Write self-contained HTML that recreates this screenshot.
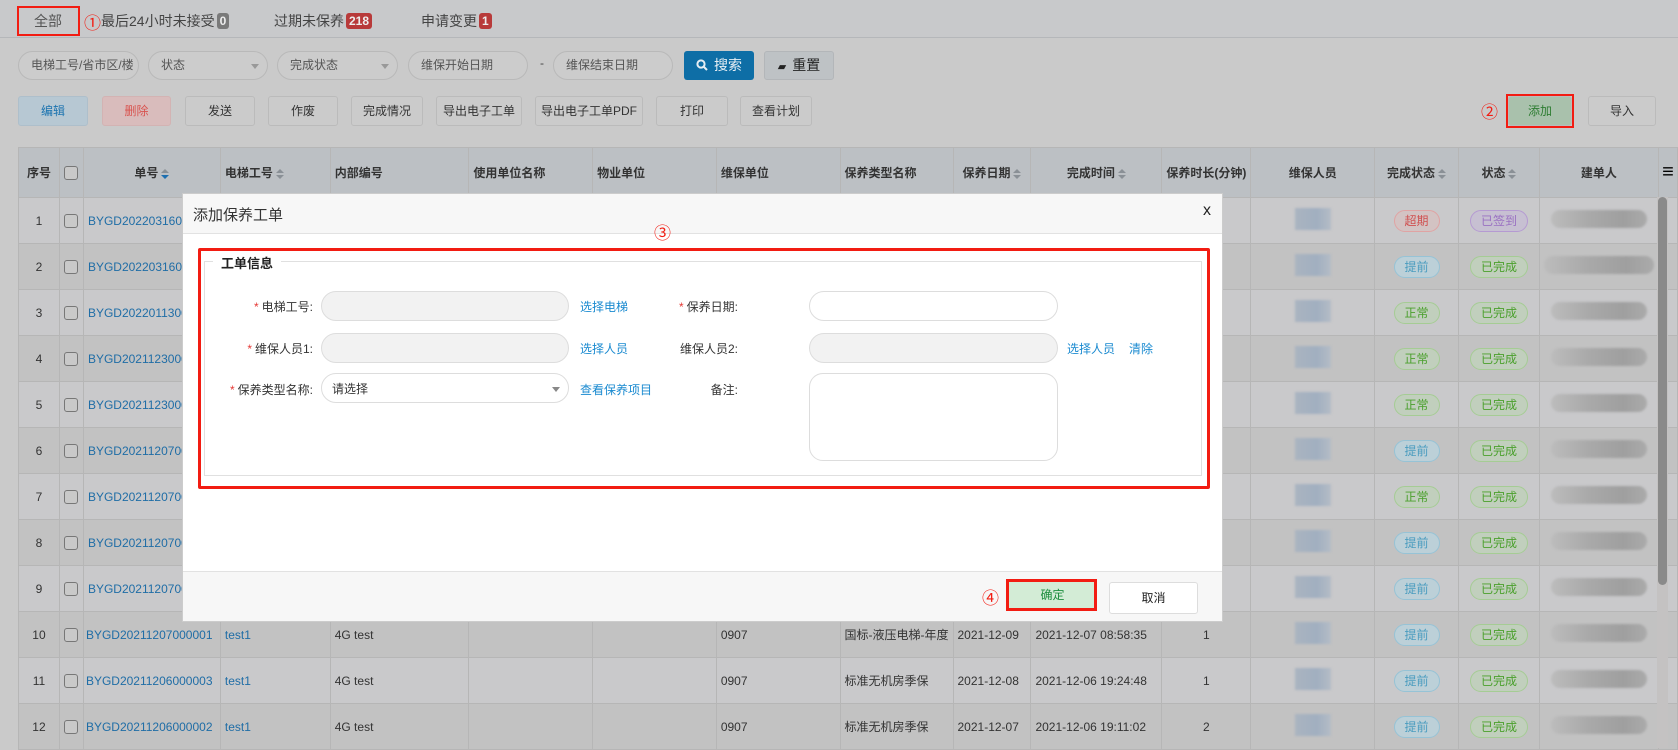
<!DOCTYPE html>
<html><head><meta charset="utf-8">
<style>
*{box-sizing:border-box;margin:0;padding:0}
body{width:1678px;height:748px;overflow:hidden;background:#cacaca;font-family:"Liberation Sans","Noto Sans CJK SC",sans-serif;font-size:12px;color:#333;position:relative}
.a{position:absolute}
.tabs{left:0;top:0;width:1678px;height:38px;background:#c8c9cb;border-bottom:1px solid #b5b7ba}
.tab{position:absolute;top:11px;font-size:14px;color:#444}
.bd{display:inline-block;color:#eee;font-size:12px;font-weight:bold;border-radius:3px;padding:0 3px;height:16px;line-height:16px;vertical-align:1px;margin-left:2px}
.inp{position:absolute;top:51px;height:29px;border:1px solid #b9b9b9;border-radius:15px;background:#cccccc;color:#555;font-size:12px;line-height:27px;padding-left:12px;white-space:nowrap;overflow:hidden}
.caret{position:absolute;right:8px;top:12px;border-left:4px solid transparent;border-right:4px solid transparent;border-top:5px solid #999}
.btn{position:absolute;top:96px;height:30px;border:1px solid #bbb;border-radius:3px;background:#cbcbcb;text-align:center;line-height:28px;font-size:12px;color:#333}
.red{position:absolute;border:2px solid #f21c12}
.circ{position:absolute;color:#f21c12;font-size:17px}
table{position:absolute;left:18px;top:147px;border-collapse:collapse;table-layout:fixed}
td,th{border:1px solid #b6b6b6;height:46px;white-space:nowrap;overflow:hidden;font-size:12px;padding:0 4px}
th{height:50px;background:#bcc0c4;color:#333;font-weight:bold;text-align:center}
tr.o td{background:#c9c9cb}tr.e td{background:#c2c2c2}
.lnk{color:#1f6da6}
.cb{display:inline-block;width:14px;height:14px;border:1px solid #777;border-radius:3px;background:#c9c9c9;vertical-align:middle}
.srt{display:inline-block;width:8px;vertical-align:middle;margin-left:3px}
.pill{display:inline-block;height:22px;line-height:20px;border-radius:11px;padding:0 10px;border:1px solid;font-size:12px}
.pb{color:#4a9cbf;border-color:#96c3d6;background:#bcd0d8}
.pg{color:#4aa02c;border-color:#a5cc94;background:#c1cfbd}
.pr{color:#d05050;border-color:#e0a3a3;background:#d3c3c3}
.pp{color:#9a70c2;border-color:#b59ad2;background:#c7c0d2}
.blu{display:inline-block;width:36px;height:22px;background:linear-gradient(90deg,#aab4c0,#a1afc0 60%,#b4bcc6);filter:blur(1px)}
.gry{display:inline-block;width:96px;height:18px;border-radius:9px;background:linear-gradient(90deg,#bcbcbc,#a9a9a9 40%,#9f9f9f 75%,#ababab);filter:blur(1px)}
.dlg{left:182px;top:193px;width:1041px;height:429px;background:#fff;border:1px solid #ccc}
.lbl{position:absolute;text-align:right;font-size:12px;color:#333;width:130px}
.lbl i{color:#e53935;font-style:normal;margin-right:3px}
.fi{position:absolute;height:30px;border:1px solid #ddd;border-radius:15px;background:#f2f2f2}
.bl{position:absolute;color:#1a8ad0;font-size:12px}
</style></head><body>

<div class="a tabs"></div>
<div class="tab" style="left:34px;color:#555">全部</div>
<div class="red" style="left:17px;top:6px;width:63px;height:30px"></div>
<div class="circ" style="left:84px;top:9px">①</div>
<div class="tab" style="left:101px">最后24小时未接受<span class="bd" style="background:#7a7a7a">0</span></div>
<div class="tab" style="left:274px">过期未保养<span class="bd" style="background:#b83a3a">218</span></div>
<div class="tab" style="left:421px">申请变更<span class="bd" style="background:#b83a3a">1</span></div>

<div class="inp" style="left:18px;width:121px">电梯工号/省市区/楼</div>
<div class="inp" style="left:148px;width:120px">状态<span class="caret"></span></div>
<div class="inp" style="left:277px;width:121px">完成状态<span class="caret"></span></div>
<div class="inp" style="left:408px;width:120px">维保开始日期</div>
<div class="a" style="left:540px;top:56px;color:#444">-</div>
<div class="inp" style="left:553px;width:120px">维保结束日期</div>
<div class="a" style="left:684px;top:51px;width:70px;height:29px;background:#0e6ea6;border-radius:3px;color:#e6eef4;font-size:14px;line-height:29px;text-align:center">
<svg width="12" height="12" viewBox="0 0 12 12" style="vertical-align:-1px;margin-right:6px"><circle cx="5" cy="5" r="3.6" fill="none" stroke="#e6eef4" stroke-width="2"/><path d="M7.5 7.5L11 11" stroke="#e6eef4" stroke-width="2"/></svg>搜索</div>
<div class="a" style="left:764px;top:51px;width:70px;height:29px;background:#bec2c5;border:1px solid #b3b6b9;border-radius:3px;color:#222;font-size:14px;line-height:27px;text-align:center"><span style="font-size:11px;margin-right:6px">▰</span>重置</div>

<div class="btn" style="left:18px;width:70px;background:#b7c8d3;border-color:#aebfcb;color:#1c74b0">编辑</div>
<div class="btn" style="left:102px;width:69px;background:#d9bcbc;border-color:#d3b3b3;color:#d9534f">删除</div>
<div class="btn" style="left:185px;width:70px">发送</div>
<div class="btn" style="left:268px;width:70px">作废</div>
<div class="btn" style="left:351px;width:72px">完成情况</div>
<div class="btn" style="left:436px;width:86px">导出电子工单</div>
<div class="btn" style="left:535px;width:108px">导出电子工单PDF</div>
<div class="btn" style="left:656px;width:72px">打印</div>
<div class="btn" style="left:740px;width:72px">查看计划</div>
<div class="btn" style="left:1508px;width:64px;background:#a9c1ac;color:#2e7d32">添加</div>
<div class="red" style="left:1506px;top:94px;width:68px;height:34px"></div>
<div class="circ" style="left:1481px;top:98px">②</div>
<div class="btn" style="left:1588px;width:68px">导入</div>

<table>
<colgroup><col style="width:41px"><col style="width:24px"><col style="width:137px"><col style="width:110px"><col style="width:139px"><col style="width:124px"><col style="width:124px"><col style="width:124px"><col style="width:109px"><col style="width:78px"><col style="width:131px"><col style="width:82px"><col style="width:124px"><col style="width:84px"><col style="width:81px"><col style="width:118px"><col style="width:19px"></colgroup>
<tr><th>序号</th><th><span class="cb"></span></th><th>单号<svg class="srt" width="8" height="10"><path d="M0 4L4 0L8 4Z" fill="#8a9096"/><path d="M0 6L4 10L8 6Z" fill="#1d6fb0"/></svg></th><th style="text-align:left">电梯工号<svg class="srt" width="8" height="10"><path d="M0 4L4 0L8 4ZM0 6L4 10L8 6Z" fill="#8a9096"/></svg></th><th style="text-align:left">内部编号</th><th style="text-align:left">使用单位名称</th><th style="text-align:left">物业单位</th><th style="text-align:left">维保单位</th><th style="text-align:left">保养类型名称</th><th>保养日期<svg class="srt" width="8" height="10"><path d="M0 4L4 0L8 4ZM0 6L4 10L8 6Z" fill="#8a9096"/></svg></th><th>完成时间<svg class="srt" width="8" height="10"><path d="M0 4L4 0L8 4ZM0 6L4 10L8 6Z" fill="#8a9096"/></svg></th><th style="text-align:left">保养时长(分钟)</th><th>维保人员</th><th>完成状态<svg class="srt" width="8" height="10"><path d="M0 4L4 0L8 4ZM0 6L4 10L8 6Z" fill="#8a9096"/></svg></th><th>状态<svg class="srt" width="8" height="10"><path d="M0 4L4 0L8 4ZM0 6L4 10L8 6Z" fill="#8a9096"/></svg></th><th>建单人</th><th style="padding:0;font-size:20px;color:#000">≡</th></tr>
<tr class="o"><td align=center>1</td><td><span class="cb"></span></td><td class="lnk">BYGD20220316000002</td><td></td><td></td><td></td><td></td><td></td><td></td><td></td><td></td><td></td><td align=center><span class="blu"></span></td><td align=center><span class="pill pr">超期</span></td><td align=center><span class="pill pp">已签到</span></td><td align=center><span class="gry"></span></td><td></td></tr>
<tr class="e"><td align=center>2</td><td><span class="cb"></span></td><td class="lnk">BYGD20220316000001</td><td></td><td></td><td></td><td></td><td></td><td></td><td></td><td></td><td></td><td align=center><span class="blu"></span></td><td align=center><span class="pill pb">提前</span></td><td align=center><span class="pill pg">已完成</span></td><td align=center><span class="gry" style="width:110px"></span></td><td></td></tr>
<tr class="o"><td align=center>3</td><td><span class="cb"></span></td><td class="lnk">BYGD20220113000001</td><td></td><td></td><td></td><td></td><td></td><td></td><td></td><td></td><td></td><td align=center><span class="blu"></span></td><td align=center><span class="pill pg">正常</span></td><td align=center><span class="pill pg">已完成</span></td><td align=center><span class="gry"></span></td><td></td></tr>
<tr class="e"><td align=center>4</td><td><span class="cb"></span></td><td class="lnk">BYGD20211230000002</td><td></td><td></td><td></td><td></td><td></td><td></td><td></td><td></td><td></td><td align=center><span class="blu"></span></td><td align=center><span class="pill pg">正常</span></td><td align=center><span class="pill pg">已完成</span></td><td align=center><span class="gry"></span></td><td></td></tr>
<tr class="o"><td align=center>5</td><td><span class="cb"></span></td><td class="lnk">BYGD20211230000001</td><td></td><td></td><td></td><td></td><td></td><td></td><td></td><td></td><td></td><td align=center><span class="blu"></span></td><td align=center><span class="pill pg">正常</span></td><td align=center><span class="pill pg">已完成</span></td><td align=center><span class="gry"></span></td><td></td></tr>
<tr class="e"><td align=center>6</td><td><span class="cb"></span></td><td class="lnk">BYGD20211207000005</td><td></td><td></td><td></td><td></td><td></td><td></td><td></td><td></td><td></td><td align=center><span class="blu"></span></td><td align=center><span class="pill pb">提前</span></td><td align=center><span class="pill pg">已完成</span></td><td align=center><span class="gry"></span></td><td></td></tr>
<tr class="o"><td align=center>7</td><td><span class="cb"></span></td><td class="lnk">BYGD20211207000004</td><td></td><td></td><td></td><td></td><td></td><td></td><td></td><td></td><td></td><td align=center><span class="blu"></span></td><td align=center><span class="pill pg">正常</span></td><td align=center><span class="pill pg">已完成</span></td><td align=center><span class="gry"></span></td><td></td></tr>
<tr class="e"><td align=center>8</td><td><span class="cb"></span></td><td class="lnk">BYGD20211207000003</td><td></td><td></td><td></td><td></td><td></td><td></td><td></td><td></td><td></td><td align=center><span class="blu"></span></td><td align=center><span class="pill pb">提前</span></td><td align=center><span class="pill pg">已完成</span></td><td align=center><span class="gry"></span></td><td></td></tr>
<tr class="o"><td align=center>9</td><td><span class="cb"></span></td><td class="lnk">BYGD20211207000002</td><td></td><td></td><td></td><td></td><td></td><td></td><td></td><td></td><td></td><td align=center><span class="blu"></span></td><td align=center><span class="pill pb">提前</span></td><td align=center><span class="pill pg">已完成</span></td><td align=center><span class="gry"></span></td><td></td></tr>
<tr class="e"><td align=center>10</td><td><span class="cb"></span></td><td class="lnk" style="padding:0 2px">BYGD20211207000001</td><td class="lnk">test1</td><td>4G test</td><td></td><td></td><td>0907</td><td>国标-液压电梯-年度</td><td>2021-12-09</td><td>2021-12-07 08:58:35</td><td align=center>1</td><td align=center><span class="blu"></span></td><td align=center><span class="pill pb">提前</span></td><td align=center><span class="pill pg">已完成</span></td><td align=center><span class="gry"></span></td><td></td></tr>
<tr class="o"><td align=center>11</td><td><span class="cb"></span></td><td class="lnk" style="padding:0 2px">BYGD20211206000003</td><td class="lnk">test1</td><td>4G test</td><td></td><td></td><td>0907</td><td>标准无机房季保</td><td>2021-12-08</td><td>2021-12-06 19:24:48</td><td align=center>1</td><td align=center><span class="blu"></span></td><td align=center><span class="pill pb">提前</span></td><td align=center><span class="pill pg">已完成</span></td><td align=center><span class="gry"></span></td><td></td></tr>
<tr class="e"><td align=center>12</td><td><span class="cb"></span></td><td class="lnk" style="padding:0 2px">BYGD20211206000002</td><td class="lnk">test1</td><td>4G test</td><td></td><td></td><td>0907</td><td>标准无机房季保</td><td>2021-12-07</td><td>2021-12-06 19:11:02</td><td align=center>2</td><td align=center><span class="blu"></span></td><td align=center><span class="pill pb">提前</span></td><td align=center><span class="pill pg">已完成</span></td><td align=center><span class="gry"></span></td><td></td></tr>
</table>
<div class="a" style="left:1657px;top:197px;width:11px;height:551px;background:#c4c2c2"></div>
<div class="a" style="left:1658px;top:197px;width:9px;height:388px;background:#8a8a8a;border-radius:5px"></div>

<div class="a dlg">
 <div class="a" style="left:0;top:0;width:1039px;height:40px;background:#f7f7f7;border-bottom:1px solid #e2e2e2"></div>
 <div class="a" style="left:10px;top:10px;font-size:15px;color:#333">添加保养工单</div>
 <div class="a" style="left:1020px;top:8px;font-size:16px;color:#222">x</div>
 <div class="a" style="left:21px;top:67px;width:998px;height:215px;border:1px solid #e0e0e0"></div>
 <div class="a" style="left:30px;top:59px;background:#fff;padding:0 8px;font-size:13px;font-weight:bold;color:#222">工单信息</div>
 <div class="lbl" style="left:0;top:104px"><i>*</i>电梯工号:</div>
 <div class="fi" style="left:138px;top:97px;width:248px"></div>
 <div class="bl" style="left:397px;top:104px">选择电梯</div>
 <div class="lbl" style="left:0;top:146px"><i>*</i>维保人员1:</div>
 <div class="fi" style="left:138px;top:139px;width:248px"></div>
 <div class="bl" style="left:397px;top:146px">选择人员</div>
 <div class="lbl" style="left:0;top:187px"><i>*</i>保养类型名称:</div>
 <div class="fi" style="left:138px;top:179px;width:248px;background:#fff;padding-left:10px;line-height:30px;font-size:12px;color:#333">请选择<span class="caret" style="top:13px;border-top-color:#888"></span></div>
 <div class="bl" style="left:397px;top:187px">查看保养项目</div>
 <div class="lbl" style="left:425px;top:104px"><i>*</i>保养日期:</div>
 <div class="fi" style="left:626px;top:97px;width:249px;background:#fff"></div>
 <div class="lbl" style="left:425px;top:146px">维保人员2:</div>
 <div class="fi" style="left:626px;top:139px;width:249px"></div>
 <div class="bl" style="left:884px;top:146px">选择人员</div>
 <div class="bl" style="left:946px;top:146px">清除</div>
 <div class="lbl" style="left:425px;top:187px">备注:</div>
 <div class="fi" style="left:626px;top:179px;width:249px;height:88px;background:#fff;border-radius:14px"></div>
 <div class="a" style="left:0;top:377px;width:1039px;height:50px;background:#f7f7f7;border-top:1px solid #e2e2e2"></div>
 <div class="a" style="left:825px;top:386px;width:89px;height:30px;background:#d3ecd6;text-align:center;line-height:30px;color:#1e8e3e;font-size:12px">确定</div>
 <div class="a" style="left:926px;top:388px;width:89px;height:32px;background:#fff;border:1px solid #ddd;border-radius:3px;text-align:center;line-height:30px;color:#222">取消</div>
</div>
<div class="red" style="left:198px;top:248px;width:1012px;height:241px;border-width:3px;border-radius:2px"></div>
<div class="circ" style="left:654px;top:219px">③</div>
<div class="red" style="left:1006px;top:579px;width:91px;height:32px;border-width:3px"></div>
<div class="circ" style="left:982px;top:584px">④</div>
</body></html>
